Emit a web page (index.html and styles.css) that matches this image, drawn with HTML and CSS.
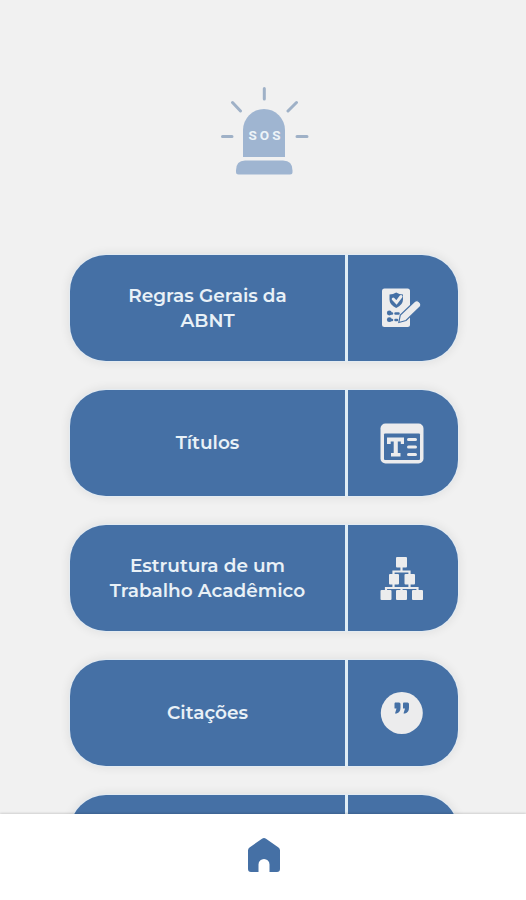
FILE: index.html
```
<!DOCTYPE html>
<html lang="pt-BR">
<head>
  <meta charset="UTF-8">
  <meta name="viewport" content="width=device-width, initial-scale=1.0">
  <title>SOS ABNT</title>
  <link rel="stylesheet" href="styles.css">
</head>
<body>
  <header>
    <svg class="logo" viewBox="0 0 90 90">
      <path d="M23 70V43a21 21 0 0 1 42 0v27z"/>
      <path d="M18.500 87.500q-2.500 0-2.500-2.500v-1.500q0-10 9-10h38q9.500 0 9.500 10v1.500q0 2.500-2.500 2.500z"/>
      <g class="rays">
        <path d="M44.300 1.500v10.500M12.500 15.500l8 8.500M76.500 15.500l-8.500 8.500M2.500 49.500h9.500M77 49.500h10"/>
      </g>
      <text x="46" y="53.300">SOS</text>
    </svg>
  </header>
  <main>
    <a class="card" href="#">
      <span class="label">Regras Gerais da ABNT</span>
      <span class="icon">
        <svg viewBox="0 0 44 44">
          <path class="light" d="M4.500 2.500h23q2.500 0 2.500 2.500v33.500q0 2.500-2.500 2.500h-23q-2.500 0-2.500-2.500V5q0-2.500 2.500-2.500z"/>
          <path class="blue" d="M16.200 6.500q3 2 6.800 2v5q0 5.500-6.800 8.500-6.700-3-6.700-8.500v-5q3.700 0 6.700-2z"/>
          <path class="line light-line" d="M13.200 13l3.300 3.500 4.500-6"/>
          <circle class="blue" cx="9.300" cy="27" r="2.400"/>
          <circle class="blue" cx="9.300" cy="33.700" r="2.400"/>
          <path class="line blue-line" d="M9 27.500h3M15.500 27.500h3M9 34h3M15.500 34h1.500"/>
          <path class="pencil" d="M18.800 36.500l1.500-7.500L34.500 15.500q2.500-2 5 .5t.5 5L26 34.500z"/>
        </svg>
      </span>
    </a>
    <a class="card" href="#">
      <span class="label">Títulos</span>
      <span class="icon">
        <svg viewBox="0 0 44 44">
          <rect class="light" x="0.500" y="2.500" width="43" height="40" rx="5"/>
          <rect class="blue" x="4" y="12.500" width="36" height="26.500" rx="1"/>
          <path class="light" d="M7 16.500h17v6.500h-3.200v-2.500h-3v11.500h2.700v3.500h-9.500v-3.500h2.700V20.500h-3V23H7z"/>
          <path class="line light-line" d="M28.500 18.500h7M28.500 26h7M28.500 33.500h7"/>
        </svg>
      </span>
    </a>
    <a class="card" href="#">
      <span class="label">Estrutura de um Trabalho Acadêmico</span>
      <span class="icon">
        <svg viewBox="0 0 44 44">
          <path class="tree" d="M21.500 11v5M13.500 20v-4.500h16V20M13.500 28v4M29.500 28v4M6 36v-4h31.500v4M21.500 32v4"/>
          <g class="light">
            <rect x="16" y="1" width="11" height="10.500" rx="1"/>
            <rect x="9" y="18" width="10" height="10.500" rx="1"/>
            <rect x="24.500" y="18" width="10.500" height="10.500" rx="1"/>
            <rect x="0.500" y="34" width="11" height="10" rx="1"/>
            <rect x="16" y="34" width="11" height="10" rx="1"/>
            <rect x="32" y="34" width="11" height="10" rx="1"/>
          </g>
        </svg>
      </span>
    </a>
    <a class="card" href="#">
      <span class="label">Citações</span>
      <span class="icon">
        <svg viewBox="0 0 44 44">
          <circle class="light" cx="21.800" cy="22" r="21"/>
          <path class="blue" d="M15 11.500h4q1.500 0 1.500 1.500v3.500q0 5-4 6h-1.500l1.500-5h-1.500q-.5 0-.5-.5v-4.500zM23.500 11.500h4q1.500 0 1.500 1.500v3.500q0 5-4 6h-1.500l1.500-5h-1.500q-.5 0-.5-.5v-4.500z"/>
        </svg>
      </span>
    </a>
    <a class="card" href="#">
      <span class="label"></span>
      <span class="icon"></span>
    </a>
  </main>
  <nav>
    <a href="#">
      <svg class="home" viewBox="0 0 34 36">
        <path d="M15 1.800q2-1.500 4 0l12.500 8.700q1.500 1 1.500 3V32q0 3-3 3h-7.500v-7.500a5.500 5.500 0 0 0-11 0V35H4q-3 0-3-3V13.500q0-2 1.500-3z"/>
      </svg>
    </a>
  </nav>
</body>
</html>
```
FILE: styles.css
```
* {
  box-sizing: border-box;
}
body {
  font-family: Montserrat, Inter, sans-serif;
  background: #f1f1f1;
  margin: 0;
  height: 100vh;
  display: flex;
  flex-direction: column;
  overflow: hidden;
}
a {
  text-decoration: none;
}
header {
  flex: none;
  height: 254.5px;
  padding: 87px 0 0 220px;
}
.logo {
  display: block;
  width: 90px;
  height: 90px;
  fill: #9fb5d1;
}
.rays {
  fill: none;
  stroke: #9fb1c7;
  stroke-width: 3;
  stroke-linecap: round;
}
.logo text {
  font-family: Roboto, sans-serif;
  font-size: 13.5px;
  font-weight: 700;
  letter-spacing: 3px;
  text-anchor: middle;
  fill: #edf4f8;
}
main {
  flex: 1;
  min-height: 0;
  overflow: hidden;
  margin-top: -12px;
  padding: 12px 68px 0 70px;
}
.card {
  display: flex;
  height: 106px;
  margin-bottom: 29px;
  border-radius: 36px;
  background: #4570a5;
  color: #e9f1f7;
  box-shadow: 0 0 0 1px #e3ebf2, 0 0 8px 3px rgba(0,0,0,0.06);
}
.label {
  width: 278px;
  padding: 1px 36px 0;
  border-right: 3px solid #dfedf6;
  display: flex;
  align-items: center;
  justify-content: center;
  text-align: center;
  font-size: 18.5px;
  font-weight: 600;
  line-height: 25.5px;
}
.icon {
  flex: 1;
  display: flex;
  align-items: center;
  justify-content: center;
}
.icon svg {
  width: 44px;
  height: 44px;
  margin-right: 2px;
}
.light {
  fill: #ececed;
}
.blue {
  fill: #4570a5;
}
.line {
  fill: none;
  stroke-width: 3;
  stroke-linecap: round;
}
.light-line {
  stroke: #ececed;
}
.blue-line {
  stroke: #4570a5;
  stroke-width: 2.5;
}
.pencil {
  fill: #ececed;
  stroke: #4570a5;
  stroke-width: 1.2;
}
.tree {
  fill: none;
  stroke: #ececed;
  stroke-width: 2.2;
}
nav {
  position: relative;
  flex: none;
  height: 86px;
  background: #fff;
  box-shadow: 0 -1px 2px rgba(0,0,0,0.14);
  display: flex;
  justify-content: center;
  padding: 23px 0 0 2px;
}
.home {
  display: block;
  width: 34px;
  height: 36px;
  fill: #4570a5;
}
```
